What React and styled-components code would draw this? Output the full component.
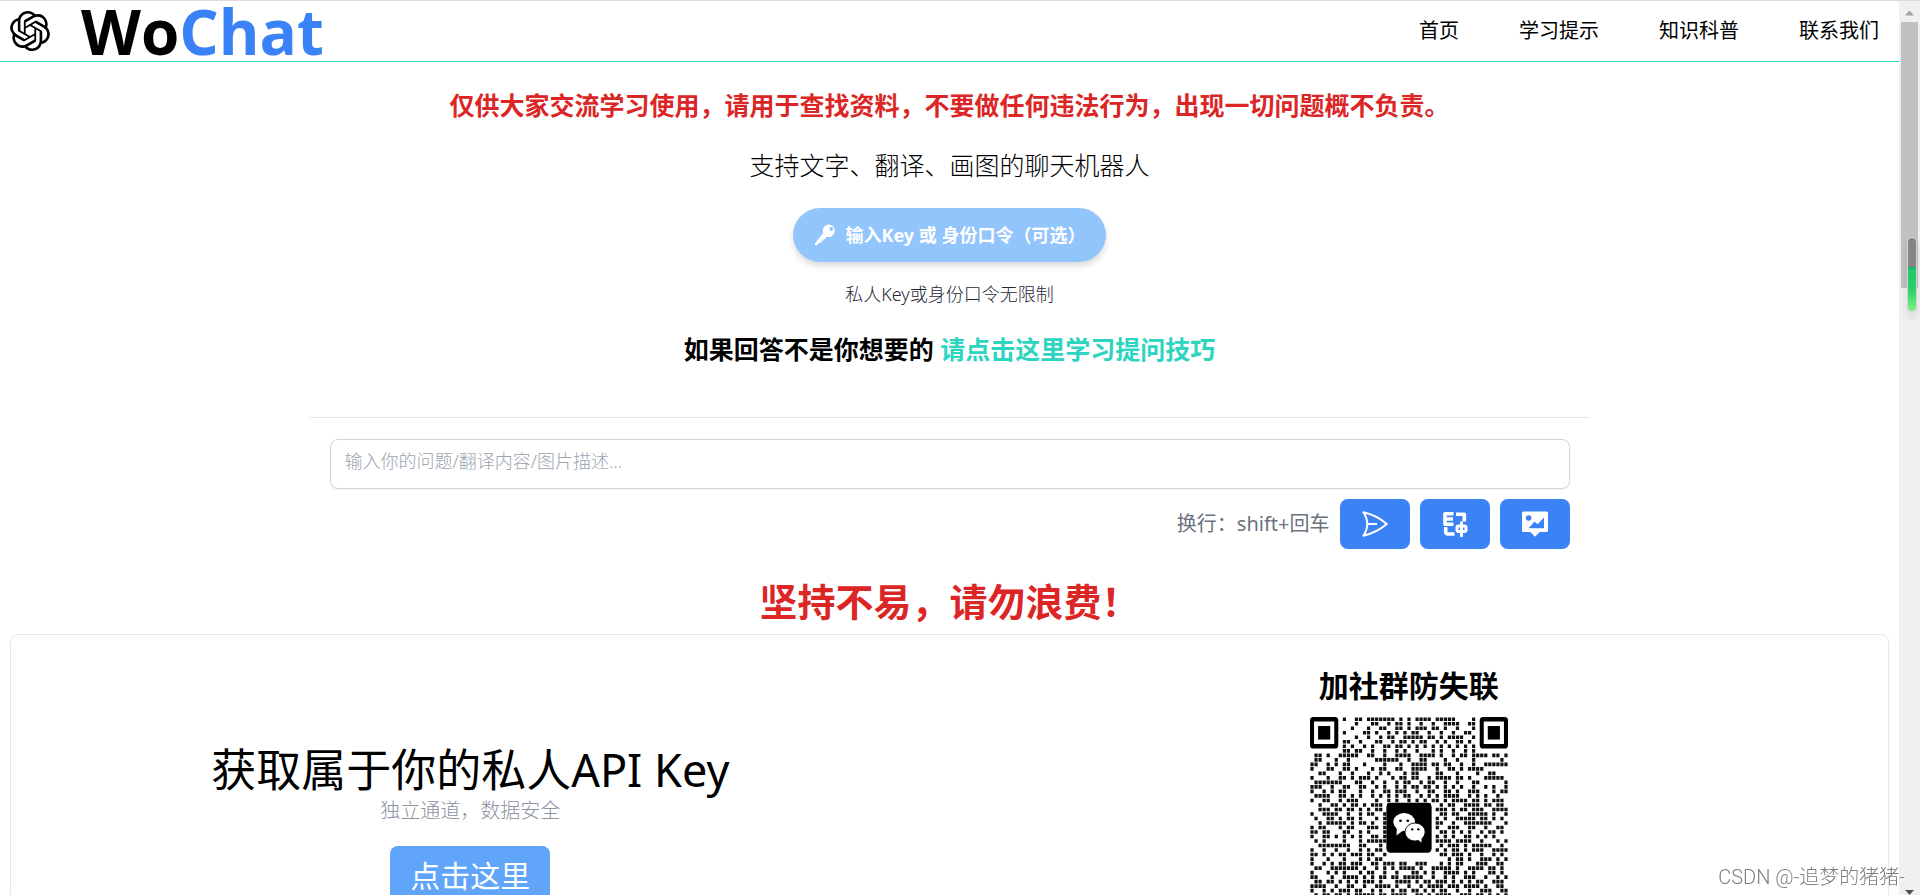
import React from "react";
import styled, { createGlobalStyle } from "styled-components";
import { SiOpenai } from "react-icons/si";

const GlobalStyle = createGlobalStyle`
  *, *::before, *::after { box-sizing: border-box; }
  body {
    margin: 0;
    background: #fff;
    color: #000;
    font-family: "Noto Sans", "Noto Sans CJK SC", sans-serif;
    font-size: 20px;
    line-height: 30px;
  }
  h1, h2, p { margin: 0; }
  a { color: inherit; text-decoration: none; }
  button, textarea { font: inherit; }
`;

const Shell = styled.div`
  display: flex;
  height: 100vh;
  border-top: 1px solid #dadce0;
`;

const Page = styled.div`
  flex: 1;
  min-width: 0;
  overflow-y: auto;
  scrollbar-width: none;
`;

const Header = styled.header`
  display: flex;
  align-items: center;
  justify-content: space-between;
  height: 61px;
  padding: 0 20px 0 10px;
  border-bottom: 1px solid #2dd4bf;
`;

const Brand = styled.a`
  display: flex;
  align-items: center;
  gap: 31px;
`;

const BrandName = styled.span`
  font-family: "Open Sans", "Noto Sans", sans-serif;
  font-size: 62px;
  font-weight: 700;
  line-height: 60px;
`;

const Accent = styled.span`
  color: #3b82f6;
`;

const Nav = styled.nav`
  display: flex;
  gap: 60px;
`;

const NavLink = styled.a`
  font-weight: 400;
  line-height: 32px;
`;

const Intro = styled.section`
  display: flex;
  flex-direction: column;
  align-items: center;
  padding-top: 26px;
`;

const Lead = styled.p`
  font-size: 25px;
  line-height: 35px;
  font-weight: ${(p) => (p.$light ? 300 : 700)};
  color: ${(p) => (p.$alert ? "#dc2626" : "#000")};
`;

const Stack = styled.div`
  display: flex;
  flex-direction: column;
  align-items: center;
  gap: 25px;
`;

const Hint = styled.p`
  margin: 20px 0 25px;
  font-size: 18px;
  line-height: 25px;
  font-weight: 300;
  color: #1f2937;
`;

const TipsLink = styled.a`
  color: #2dd4bf;
`;

const KeyButton = styled.button`
  display: flex;
  align-items: center;
  gap: 10px;
  height: 54px;
  padding: 0 21px;
  border: 0;
  border-radius: 28px;
  background: #93c5fd;
  color: #fff;
  font-size: 18px;
  font-weight: 700;
  box-shadow: 0 4px 6px rgba(0, 0, 0, 0.14);
`;

const Composer = styled.form`
  width: calc(100% - 40px);
  max-width: 1280px;
  margin: 50px auto 0;
  padding: 21px 20px 0;
  border-top: 1px solid #e5e7eb;
`;

const Question = styled.textarea`
  display: block;
  width: 100%;
  height: 50px;
  padding: 9px 14px;
  border: 1px solid #d1d5db;
  border-radius: 8px;
  background: #fff;
  font-size: 18px;
  line-height: 25px;
  resize: none;
  overflow: hidden;
  box-shadow: 0 1px 2px rgba(0, 0, 0, 0.05);
  &::placeholder { color: #9ca3af; opacity: 1; font-weight: 300; }
`;

const Actions = styled.div`
  display: flex;
  align-items: center;
  justify-content: flex-end;
  gap: 10px;
  margin-top: 10px;
`;

const Shortcut = styled.span`
  font-weight: 400;
  color: #6b7280;
`;

const ActionButton = styled.button`
  display: flex;
  align-items: center;
  justify-content: center;
  width: 70px;
  height: 50px;
  padding: 0;
  border: 0;
  border-radius: 8px;
  background: #3b82f6;
  color: #fff;
`;

const Slogan = styled.h1`
  margin-top: 27px;
  padding-bottom: 8px;
  text-align: center;
  font-size: 38px;
  line-height: 50px;
  font-weight: 700;
  color: #dc2626;
`;

const Card = styled.section`
  display: flex;
  margin: 0 10px 30px;
  border: 1px solid #e5e7eb;
  border-radius: 8px;
`;

const Columns = styled.div`
  flex: 1;
  display: grid;
  grid-template-columns: 1fr 1fr;
  margin: 0 10px 0 -10px;
`;

const Column = styled.div`
  display: flex;
  flex-direction: column;
  align-items: center;
  padding: ${(p) => p.$top}px 0 30px;
`;

const KeyTitle = styled.h2`
  font-size: 45px;
  line-height: 50px;
  font-weight: 400;
`;

const KeyNote = styled.p`
  font-weight: 300;
  line-height: 32px;
  color: #8b93a1;
`;

const GetKey = styled.a`
  margin-top: 19px;
  padding: 0 20px;
  border-radius: 8px;
  background: #60a5fa;
  color: #fff;
  font-size: 30px;
  line-height: 60px;
`;

const GroupTitle = styled.h2`
  margin-bottom: 11px;
  font-size: 30px;
  line-height: 40px;
  font-weight: 700;
`;

const ScrollTrack = styled.div`
  position: relative;
  display: flex;
  flex-direction: column;
  align-items: center;
  justify-content: space-between;
  width: 21px;
  background: #f0f0f0;
`;

const ScrollThumb = styled.div`
  width: 17px;
  height: 266px;
  margin-bottom: auto;
  background: #c1c1c1;
`;

const Arrow = styled.svg`
  display: block;
  width: 17px;
  height: ${(p) => p.$height}px;
`;

const Meter = styled.div`
  position: absolute;
  top: 236px;
  right: 3px;
  width: 10px;
  height: 75px;
  border: 1px solid #d4d4d4;
  border-radius: 5px;
  background: linear-gradient(#858585 29px, #13b35c 29px, #1fc86a 32px, #2bd06c 52px, #7df582 73px);
  box-shadow: 0 6px 8px rgba(0, 0, 0, 0.1);
`;

const Watermark = styled.div`
  position: fixed;
  right: 15px;
  bottom: 3px;
  font-family: Roboto, "Noto Sans CJK SC", sans-serif;
  font-weight: 300;
  color: #808080;
  text-shadow: 1px 1px 1px #fff;
`;

const KeyIcon = () => (
  <svg width="22" height="22" viewBox="0 0 22 22" fill="currentColor" aria-hidden="true">
    <path
      fillRule="evenodd"
      d="M15.2.6A6.200 6.200 0 1 1 13.200 12.800L11.400 13.200V15L9.500 15.300 9.200 16.800 7.500 17 7.200 18.600 5.400 18.800 2.600 21.500 1 20.900V19.200L9.200 9A6.200 6.200 0 0 1 15.200.6ZM17.300 3.100a1.900 1.900 0 1 0 0 3.800 1.900 1.900 0 0 0 0-3.800Z"
    />
  </svg>
);

const SendIcon = () => (
  <svg width="26" height="26" viewBox="0 0 26 26" fill="none" stroke="currentColor" strokeWidth="2" strokeLinejoin="round" aria-hidden="true">
    <path d="M1.300 1.300C10 3.300 18.500 7.600 24.700 13 18.500 18.400 10 22.700 1.300 24.700Q5.300 19 5.300 13T1.300 1.300ZM5.300 13H15" />
  </svg>
);

const TranslateIcon = () => (
  <svg width="26" height="26" viewBox="0 0 26 26" fill="none" stroke="currentColor" strokeWidth="3" strokeLinejoin="round" aria-hidden="true">
    <path d="M11.500 2.800H3V13.300H11.500M3 8H11" strokeWidth="3.600" />
    <path d="M14 3.200H22.300V10.500M3.700 16V20.500Q3.700 23 6.200 23H12.500" strokeWidth="3.600" />
    <rect x="15" y="15" width="9" height="5.500" rx="1.500" />
    <path d="M19.500 11.500V25" strokeLinecap="round" />
  </svg>
);

const PictureIcon = () => (
  <svg width="26" height="26" viewBox="0 0 26 26" aria-hidden="true">
    <path fill="currentColor" d="M1.500.5H24.500Q26 .5 26 2V19.500Q26 21 24.500 21H17.700L13 25.700 8.300 21H1.500Q0 21 0 19.500V2Q0 .5 1.500.5Z" />
    <circle cx="6.600" cy="7" r="2.800" fill="#3b82f6" />
    <path fill="#3b82f6" d="M6.500 17.200 12.600 10.500 15.500 13.200 22 6.500V17.200Z" />
  </svg>
);

const QR_ROWS = [
  "        #  ## ####### # # #### #####    #        ",
  "           #   ##  # ## #  #  #  ####  ##        ",
  "          #   #  ##  ## # ### ## #  #   ##       ",
  "        #    ## #  # # # ##  #  #  #  ##         ",
  "           #  #  # ##  ##### ## # ####  #        ",
  "        ##  #   ##  # ## # ##  # #  ## #         ",
  "        # #  # #  ## ## # # # # # # # # #        ",
  "        ## ##  #  #  # #  #   # #  #  # #        ",
  " ## #  #####  ##  #  ####  #### #  # ## #### ## #",
  " ##   #  #      ######  #  ##    #  #   #      # ",
  "##  # # ##   #    #   #  #### ## ##  #  #  ######",
  "#   ##  ## #   # ##  ##  ####  #  ## # ####      ",
  "  ##   #  #   #  # #   # ##    ##   #    #  ##   ",
  "#   #  ## # ### #   # ## ##  # #### ## #   ##### ",
  " #######   ##  #  #  # ##  # ##  #  #   ##      #",
  "###  #  ##  ##  # #  # # ## ## # # # #  #  # #  #",
  "#  # # ##   #  #  ## ###  #  ##  ## #  ###   # ##",
  " ####  ## # #  # # # # ##  # # # ####  # # #  #  ",
  "#  ##  # ###    #  # #  # # # ## # #### ## # ### ",
  "  #  ## # ## # ### #         #  # ##  #### ## ## ",
  "  ### ## ## # # ##             ### # ## ###  ####",
  "#  ####  #  # ##  #             ## ##  ##### #  #",
  " #  ## # ## #   # #            # #  ##### ## # # ",
  "  # ##### # ## #  #            ##  #  #######   #",
  "# ##   # ##   ### #            #  ###  ##  #  ## ",
  "## ##   ##  # #   #             ## # # #  # ## # ",
  "#  ## # # # #  ## #            # # #  ## # # #   ",
  " # #    #   # #####            #### ####  #   # #",
  "  ########  ##   #              # ### # #####  # ",
  "#  #  #  #  # # ##             # # ## # ###  ####",
  "## # # ## ### ##  #             ## ### #  #  # # ",
  "#   #   #   # # ##                # ## #  ### # #",
  "#  # # ## ###  ## ### ##  ###   # # ##   ###  ## ",
  " ##  ####### #  # # # #### #  ##### #  #### ## # ",
  "#   # # #   # ##  #  #   ## # #  #### # #   ## # ",
  "##   #  #### # # ## ## #####  #  # #  ###  #  # #",
  " ## ## # # # ### #   #### # ## ### # # # ##  ### ",
  "####  #  ##  #  #### #  #  # #### ### #### #  ## ",
  "#  # # ### ##  # #  # ## ## # # ##  #  #  ###  ##",
  " # ## ## # ##### ## ####  ## # ####  ### ## # # #",
  "                 # ##  # ## ## # ## # ##### # ## ",
  "                # # # ### #  # ##  ## #   # ##  #",
  "         # ## # ### ### #  # ## # # # # # # # ## ",
  "        ## # #  ## #  ## ## # ## ## # #   ##  #  ",
  "         # ### # # ## #  ##  # # ## # ##### # ## ",
  "        #  # ## ## # ## # # ## ## # #  # ## #  # ",
  "         ## # ## # ## ## # ## # ## # # ## # # ## ",
  "        # # ## # ## # ## # # ## ## #  # # ## #  #",
  "        # ## # ## ## # # ## # ## # # # ## # ## # ",
];

const qrDots = QR_ROWS.flatMap((row, y) =>
  [...row].flatMap((mark, x) => (mark === "#" && x < 49 ? [`M${x + 0.1} ${y + 0.1}h.8v.8h-.8Z`] : []))
).join("");

const Finder = ({ x, y }) => (
  <g transform={`translate(${x} ${y})`}>
    <rect x=".5" y=".5" width="6" height="6" rx=".3" fill="#fff" stroke="#000" />
    <rect x="2" y="2" width="3" height="3" />
  </g>
);

const QrCode = () => (
  <svg width="198" height="221" viewBox="0 0 49 49" preserveAspectRatio="none" role="img" aria-label="QR">
    <path d={qrDots} fill="#111" />
    <rect width="8" height="8" fill="#fff" />
    <rect x="41" width="8" height="8" fill="#fff" />
    <Finder x={0} y={0} />
    <Finder x={42} y={0} />
    <Finder x={0} y={42} />
    <rect x="18.900" y="19" width="11.200" height="11.100" rx="1" />
    <g fill="#fff">
      <ellipse cx="23.300" cy="23.300" rx="2.700" ry="2" />
      <path d="M21.500 24.500 21.400 26.300 23.300 25Z" />
      <ellipse cx="26" cy="25.500" rx="2.500" ry="2" stroke="#000" strokeWidth=".2" />
      <path d="M26.500 27 27.600 27.900 27.600 26.500Z" />
    </g>
    <ellipse cx="22.400" cy="23" rx=".35" ry=".3" />
    <ellipse cx="24.200" cy="23" rx=".35" ry=".3" />
    <ellipse cx="25.300" cy="24.900" rx=".3" ry=".26" />
    <ellipse cx="26.800" cy="24.900" rx=".3" ry=".26" />
  </svg>
);

const NAV_ITEMS = ["首页", "学习提示", "知识科普", "联系我们"];

export default function App() {
  return (
    <>
      <GlobalStyle />
      <Shell>
        <Page>
          <Header>
            <Brand href="#">
              <SiOpenai size={40} aria-hidden="true" />
              <BrandName>
                Wo<Accent>Chat</Accent>
              </BrandName>
            </Brand>
            <Nav>
              {NAV_ITEMS.map((item) => (
                <NavLink href="#" key={item}>{item}</NavLink>
              ))}
            </Nav>
          </Header>
          <main>
            <Intro>
              <Stack>
                <Lead $alert>仅供大家交流学习使用，请用于查找资料，不要做任何违法行为，出现一切问题概不负责。</Lead>
                <Lead $light>支持文字、翻译、画图的聊天机器人</Lead>
                <KeyButton type="button">
                  <KeyIcon />
                  输入Key 或 身份口令（可选）
                </KeyButton>
              </Stack>
              <Hint>私人Key或身份口令无限制</Hint>
              <Lead>
                如果回答不是你想要的 <TipsLink href="#">请点击这里学习提问技巧</TipsLink>
              </Lead>
            </Intro>
            <Composer onSubmit={(e) => e.preventDefault()}>
              <Question aria-label="输入你的问题" placeholder="输入你的问题/翻译内容/图片描述..." />
              <Actions>
                <Shortcut>换行：shift+回车</Shortcut>
                <ActionButton type="submit" aria-label="发送"><SendIcon /></ActionButton>
                <ActionButton type="button" aria-label="翻译"><TranslateIcon /></ActionButton>
                <ActionButton type="button" aria-label="画图"><PictureIcon /></ActionButton>
              </Actions>
            </Composer>
            <Slogan>坚持不易，请勿浪费！</Slogan>
            <Card>
              <Columns>
                <Column $top={110}>
                  <KeyTitle>获取属于你的私人API Key</KeyTitle>
                  <KeyNote>独立通道，数据安全</KeyNote>
                  <GetKey href="#">点击这里</GetKey>
                </Column>
                <Column $top={31}>
                  <GroupTitle>加社群防失联</GroupTitle>
                  <QrCode />
                </Column>
              </Columns>
            </Card>
          </main>
        </Page>
        <ScrollTrack aria-hidden="true">
          <Arrow $height={21} viewBox="0 0 17 21"><path d="M4 14.500 8.500 9.500 13 14.500Z" fill="#a3a3a3" /></Arrow>
          <ScrollThumb />
          <Arrow $height={6} viewBox="0 0 17 6"><path d="M4 1 8.500 6 13 1Z" fill="#505050" /></Arrow>
          <Meter />
        </ScrollTrack>
      </Shell>
      <Watermark>CSDN @-追梦的猪猪-</Watermark>
    </>
  );
}
